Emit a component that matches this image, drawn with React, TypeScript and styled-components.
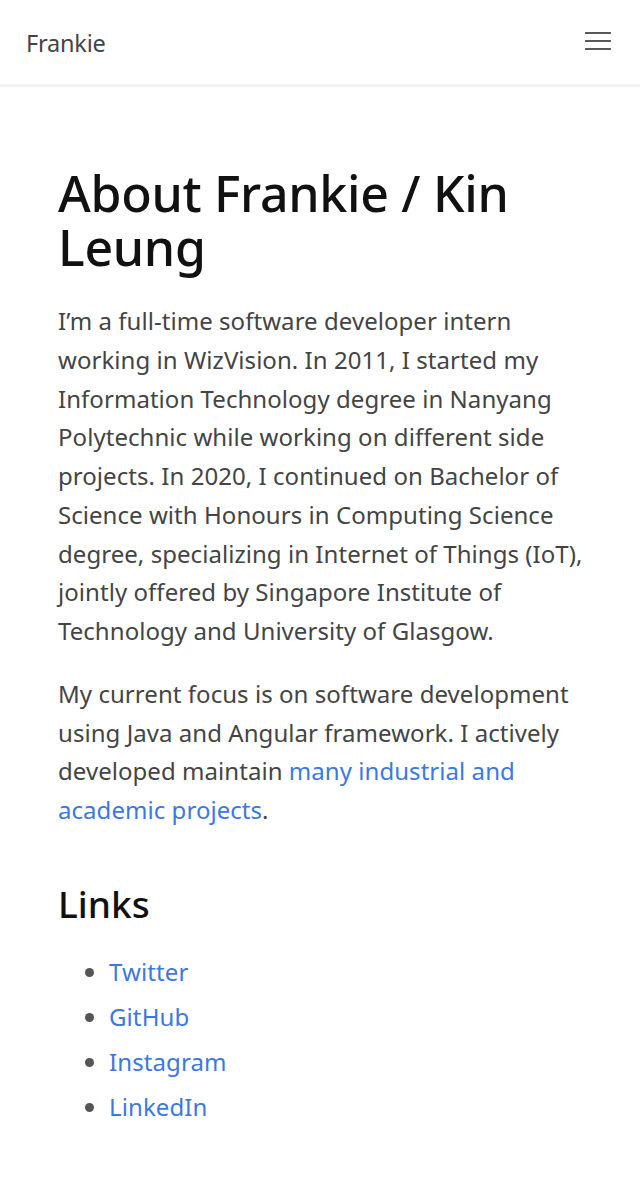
import React from "react";
import styled, { createGlobalStyle } from "styled-components";

const Global = createGlobalStyle`
  html, body { margin: 0; padding: 0; background: #fff; }
  body { font-family: "Segoe UI", "Noto Sans", sans-serif; }
`;

const Header = styled.header`
  height: 83px;
  display: flex;
  align-items: center;
  justify-content: space-between;
  padding: 1px 29px 0 26px;
  border-bottom: 3px solid #f2f2f2;
`;

const Brand = styled.a`
  font-size: 23.5px;
  color: #444;
  text-decoration: none;
  letter-spacing: -0.2px;
`;

const Burger = styled.button`
  background: none;
  border: 0;
  padding: 0;
  margin-top: -3px;
  width: 26px;
  height: 18px;
  display: flex;
  flex-direction: column;
  justify-content: space-between;
  cursor: pointer;
`;

const Bar = styled.span`
  display: block;
  height: 2px;
  background: #5a5a5a;
`;

const Main = styled.main`
  padding: 79px 46px 40px 58px;
  color: #444;
`;

const Title = styled.h1`
  margin: 0 0 28px;
  font-size: 50px;
  line-height: 54px;
  font-weight: 500;
  color: #111;
  letter-spacing: -0.3px;
`;

const Para = styled.p`
  margin: 0 0 24px;
  font-size: 24px;
  line-height: 38.75px;
  letter-spacing: 0.05px;
`;

const Link = styled.a`
  color: #3d78e0;
  text-decoration: none;
`;

const SubTitle = styled.h2`
  margin: 52px 0 23px;
  font-size: 37px;
  line-height: 44px;
  font-weight: 500;
  color: #111;
`;

const List = styled.ul`
  margin: 0;
  padding-left: 51px;
  font-size: 24px;
  line-height: 45px;
  letter-spacing: 0.1px;
  li::marker { color: #555; }
`;

export default function App() {
  return (
    <>
      <Global />
      <Header>
        <Brand href="#">Frankie</Brand>
        <Burger aria-label="menu">
          <Bar />
          <Bar />
          <Bar />
        </Burger>
      </Header>
      <Main>
        <Title>About Frankie / Kin Leung</Title>
        <Para>
          I’m a full-time software developer intern working in WizVision. In 2011, I started my
          Information Technology degree in Nanyang Polytechnic while working on different side
          projects. In 2020, I continued on Bachelor of Science with Honours in Computing Science
          degree, specializing in Internet of Things (IoT), jointly offered by Singapore Institute
          of Technology and University of Glasgow.
        </Para>
        <Para>
          My current focus is on software development using Java and Angular framework. I actively
          developed maintain <Link href="#">many industrial and academic projects</Link>.
        </Para>
        <SubTitle>Links</SubTitle>
        <List>
          <li><Link href="#">Twitter</Link></li>
          <li><Link href="#">GitHub</Link></li>
          <li><Link href="#">Instagram</Link></li>
          <li><Link href="#">LinkedIn</Link></li>
        </List>
      </Main>
    </>
  );
}
